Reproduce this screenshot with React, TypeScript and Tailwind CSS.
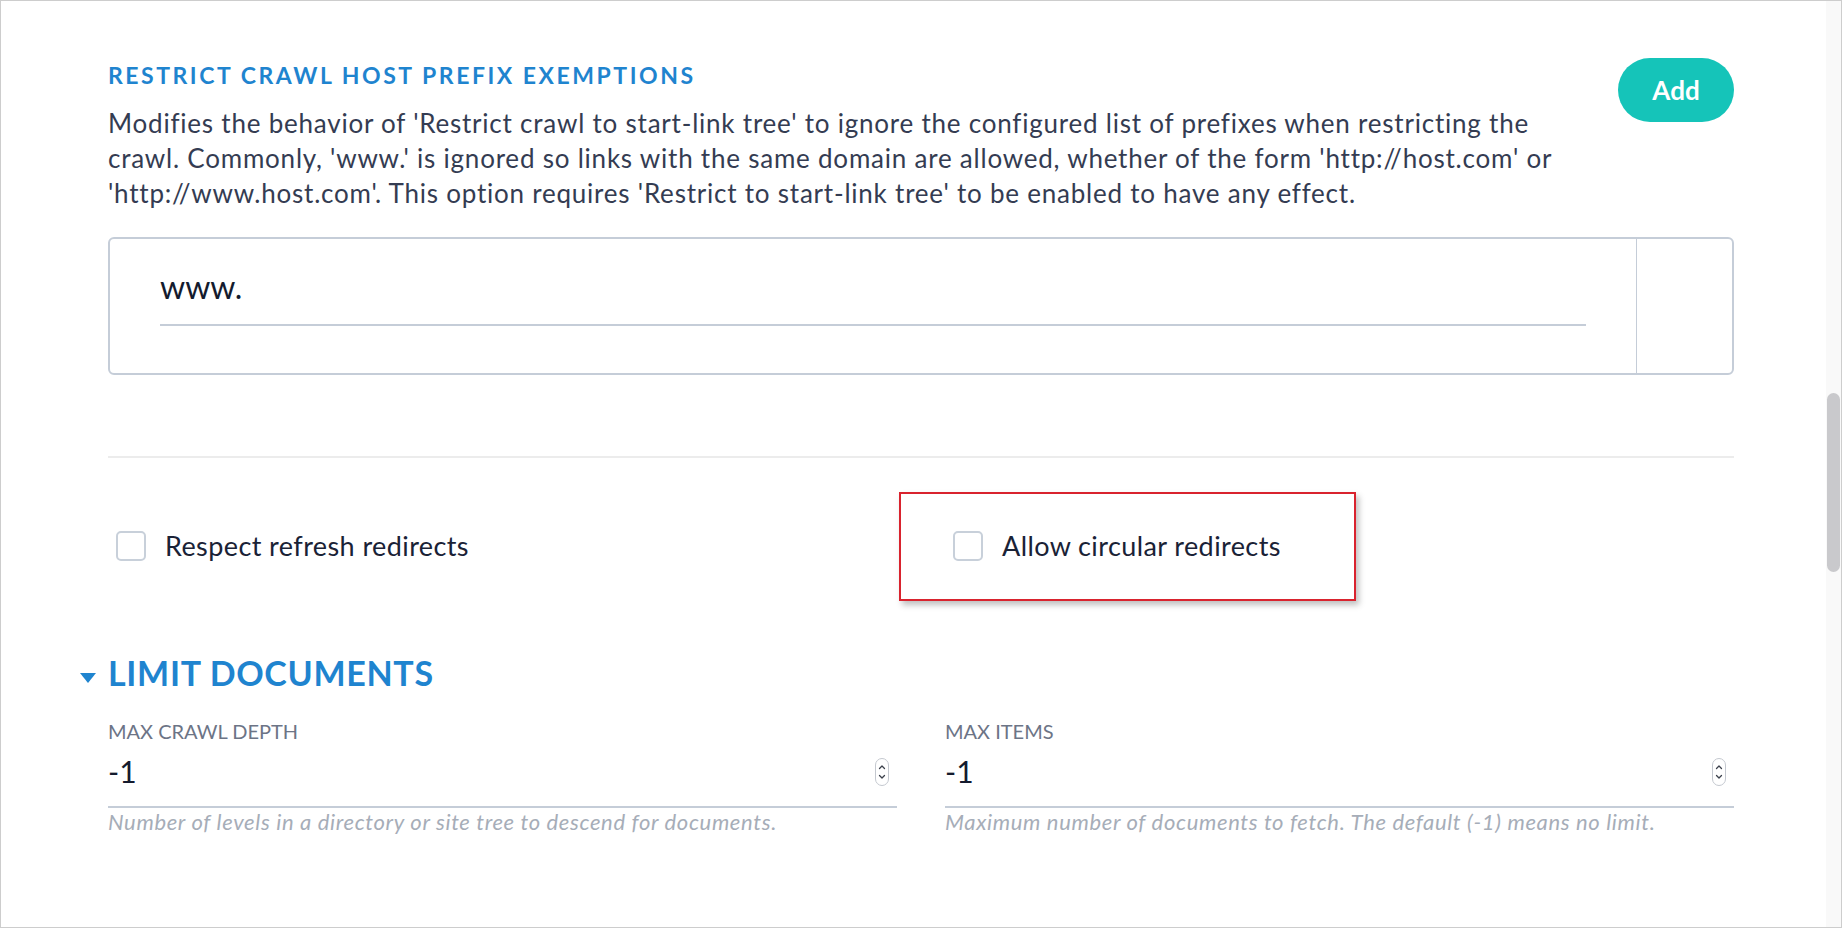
import React from "react";

function Spinner() {
  return (
    <svg width="14" height="28" viewBox="0 0 14 28" className="mt-[15px] shrink-0">
      <rect x="0.5" y="0.5" width="13" height="27" rx="6.5" fill="#fff" stroke="#c4c8cf" />
      <path d="M4.5 10.5 L7 8 L9.5 10.5" fill="none" stroke="#3b404b" strokeWidth="1.3" strokeLinecap="round" strokeLinejoin="round" />
      <path d="M4.5 17.5 L7 20 L9.5 17.5" fill="none" stroke="#3b404b" strokeWidth="1.3" strokeLinecap="round" strokeLinejoin="round" />
    </svg>
  );
}

function Checkbox({ label }: { label: string }) {
  return (
    <label className="flex items-center gap-[19px] pl-[8px]">
      <span className="w-[30px] h-[30px] rounded-[5px] border-2 border-[#c8d0da] bg-white shrink-0" />
      <span className="text-[27px] leading-[34px] tracking-[0.015em] text-[#1a2236]">{label}</span>
    </label>
  );
}

function NumberField({ label, value, help }: { label: string; value: string; help: string }) {
  return (
    <div>
      <div className="text-[20px] leading-[24px] text-[#6c7486] uppercase">{label}</div>
      <div className="h-[65px] flex items-start justify-between border-b-2 border-[#c5cdd8] pr-[8px]">
        <span className="pt-[10px] text-[30px] leading-[36px] text-[#141b2e]">{value}</span>
        <Spinner />
      </div>
      <p className="mt-[1px] text-[22px] leading-[26px] italic tracking-[0.03em] text-[#a6adb8]">{help}</p>
    </div>
  );
}

export default function App() {
  return (
    <div className="w-[1842px] h-[928px] border border-[#cdcdcd] flex overflow-hidden bg-white font-[Lato,sans-serif]">
      {/* Main scroll content */}
      <main className="flex-1 pl-[107px] pr-[92px] pt-[60px]">
        {/* Host prefix exemptions */}
        <section>
          <div className="flex items-start justify-between gap-[40px]">
            <div className="flex-1">
              <h3 className="text-[23px] leading-[28px] font-bold tracking-[0.11em] text-[#1f84cf] uppercase">
                Restrict crawl host prefix exemptions
              </h3>
              <p className="mt-[17px] text-[26px] leading-[35px] tracking-[0.03em] text-[#343c52]">
                Modifies the behavior of 'Restrict crawl to start-link tree' to ignore the configured list of prefixes when restricting the crawl. Commonly, 'www.' is ignored so links with the same domain are allowed, whether of the form 'http://host.com' or 'http://www.host.com'. This option requires 'Restrict to start-link tree' to be enabled to have any effect.
              </p>
            </div>
            <button className="mt-[-3px] w-[116px] h-[64px] shrink-0 rounded-full bg-[#15c4b9] text-white text-[26px] font-bold">
              Add
            </button>
          </div>

          <div className="mt-[26px] h-[138px] flex border-2 border-[#c5cdd8] rounded-[6px]">
            <div className="flex-1 px-[50px] pt-[29px]">
              <div className="h-[58px] border-b-2 border-[#c5cdd8] flex items-start">
                <span className="text-[32px] leading-[38px] text-[#141b2e]">www.</span>
              </div>
            </div>
            <div className="w-[96px] border-l border-[#c5cdd8]" />
          </div>
        </section>

        <div className="mt-[81px] h-[2px] bg-[#ececec]" />

        {/* Redirect options */}
        <div className="mt-[71px] grid grid-cols-2 gap-[48px]">
          <Checkbox label="Respect refresh redirects" />
          <div className="relative">
            <Checkbox label="Allow circular redirects" />
            <div className="absolute left-[-46px] top-[-37px] w-[457px] h-[109px] border-2 border-[#d9232e] shadow-[3px_4px_6px_rgba(0,0,0,0.25)] pointer-events-none" />
          </div>
        </div>

        {/* Limit documents */}
        <section className="mt-[89px]">
          <div className="flex items-center gap-[12px] ml-[-28px]">
            <svg width="16" height="10" viewBox="0 0 16 10" className="mt-[10px]">
              <path d="M0 0 H16 L8 10 Z" fill="#1f84cf" />
            </svg>
            <h2 className="text-[34px] leading-[41px] font-bold tracking-[0.02em] text-[#1f84cf] uppercase">
              Limit documents
            </h2>
          </div>
          <div className="mt-[26px] grid grid-cols-2 gap-[48px]">
            <NumberField
              label="Max crawl depth"
              value="-1"
              help="Number of levels in a directory or site tree to descend for documents."
            />
            <NumberField
              label="Max items"
              value="-1"
              help="Maximum number of documents to fetch. The default (-1) means no limit."
            />
          </div>
        </section>
      </main>

      {/* Scrollbar */}
      <div className="relative w-[15px] bg-[#f9f9f9]">
        <div className="absolute left-[1px] right-[1px] top-[392px] h-[179px] rounded-full bg-[#c9c9cc]" />
      </div>
    </div>
  );
}
